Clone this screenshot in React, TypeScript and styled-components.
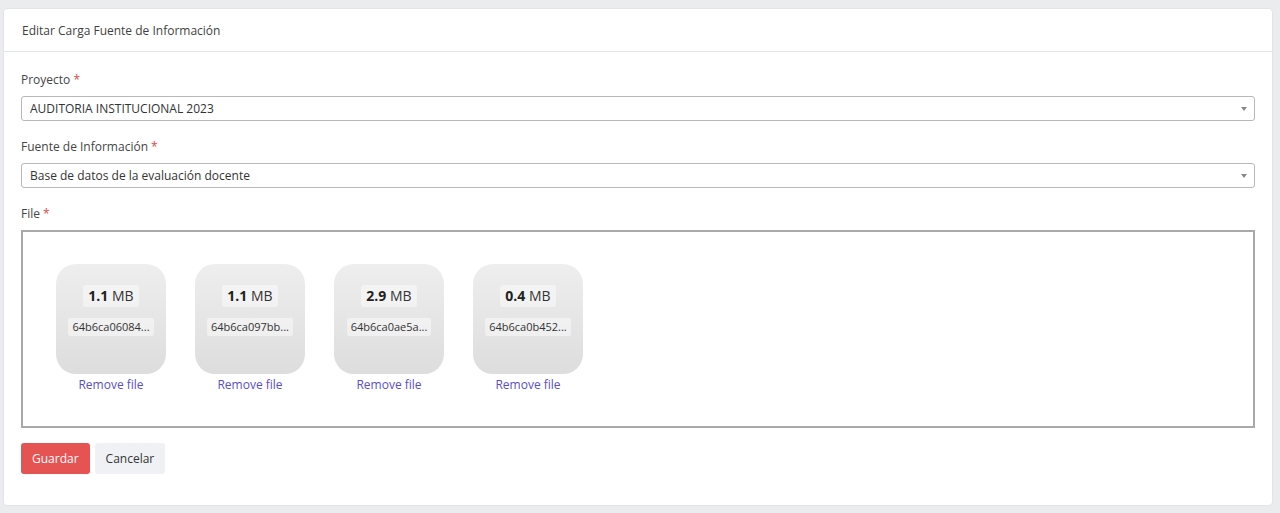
import React from "react";
import styled, { createGlobalStyle } from "styled-components";

const Global = createGlobalStyle`
  html, body { margin: 0; padding: 0; background: #ebecee; }
  body { font-family: "Open Sans", "Noto Sans", sans-serif; color: #3a3a3a; }
  * { box-sizing: border-box; }
`;

const Page = styled.div`
  padding: 8px 7px 7px 3px;
  height: 513px;
`;

const Card = styled.div`
  background: #fff;
  border: 1px solid #e2e4e7;
  border-radius: 4px;
  height: 498px;
  display: flex;
  flex-direction: column;
`;

const CardHeader = styled.div`
  height: 43px;
  display: flex;
  align-items: center;
  padding: 0 18px;
  border-bottom: 1px solid #e4e6e9;
  font-size: 12px;
  color: #3f3f3f;
`;

const CardBody = styled.div`
  padding: 20px 17px 0 17px;
  display: flex;
  flex-direction: column;
`;

const Label = styled.label`
  font-size: 12px;
  color: #444;
  line-height: 16px;
  margin-bottom: 8px;
  display: block;
`;

const Req = styled.span`
  color: #e0483f;
`;

const Field = styled.div`
  margin-bottom: 18px;
`;

const Select = styled.div`
  height: 25px;
  border: 1px solid #b8b8b8;
  border-radius: 3px;
  display: flex;
  align-items: center;
  justify-content: space-between;
  padding: 0 7px 0 8px;
  font-size: 12px;
  color: #333;
`;

const Caret = styled.span`
  width: 0;
  height: 0;
  border-left: 3.5px solid transparent;
  border-right: 3.5px solid transparent;
  border-top: 4px solid #888;
`;

const Dropzone = styled.div`
  height: 198px;
  border: 2px solid #a9a9a9;
  display: flex;
  align-items: flex-start;
  gap: 29px;
  padding: 32px 0 0 33px;
`;

const Preview = styled.div`
  display: flex;
  flex-direction: column;
  align-items: center;
  width: 110px;
`;

const Thumb = styled.div`
  width: 110px;
  height: 110px;
  border-radius: 20px;
  background: linear-gradient(to bottom, #eeeeee, #dddddd);
  display: flex;
  flex-direction: column;
  align-items: center;
  padding-top: 21px;
`;

const Size = styled.div`
  font-size: 14px;
  color: #333;
  background: rgba(255, 255, 255, 0.45);
  border-radius: 3px;
  padding: 0 5px;
  line-height: 22px;
  margin-bottom: 11px;
  b { font-weight: 700; color: #222; }
`;

const Name = styled.div`
  font-size: 11px;
  color: #333;
  background: rgba(255, 255, 255, 0.45);
  border-radius: 2px;
  padding: 0 4px;
  line-height: 18px;
  white-space: nowrap;
`;

const Remove = styled.a`
  font-size: 12px;
  color: #5a4fc7;
  margin-top: 3px;
  line-height: 16px;
  text-decoration: none;
  cursor: pointer;
`;

const Actions = styled.div`
  display: flex;
  gap: 5px;
  margin-top: 15px;
`;

const Button = styled.button<{ $primary?: boolean }>`
  height: 31px;
  border: none;
  border-radius: 3px;
  font-family: inherit;
  font-size: 12px;
  padding: 0 11px;
  background: ${(p) => (p.$primary ? "#e55353" : "#eff1f4")};
  color: ${(p) => (p.$primary ? "#fff" : "#333")};
`;

const files = [
  { size: "1.1", name: "64b6ca06084..." },
  { size: "1.1", name: "64b6ca097bb..." },
  { size: "2.9", name: "64b6ca0ae5a..." },
  { size: "0.4", name: "64b6ca0b452..." },
];

export default function App() {
  return (
    <>
      <Global />
      <Page>
        <Card>
          <CardHeader>Editar Carga Fuente de Información</CardHeader>
          <CardBody>
            <Field>
              <Label>
                Proyecto <Req>*</Req>
              </Label>
              <Select>
                <span>AUDITORIA INSTITUCIONAL 2023</span>
                <Caret />
              </Select>
            </Field>
            <Field>
              <Label>
                Fuente de Información <Req>*</Req>
              </Label>
              <Select>
                <span>Base de datos de la evaluación docente</span>
                <Caret />
              </Select>
            </Field>
            <div>
              <Label>
                File <Req>*</Req>
              </Label>
              <Dropzone>
                {files.map((f, i) => (
                  <Preview key={i}>
                    <Thumb>
                      <Size>
                        <b>{f.size}</b> MB
                      </Size>
                      <Name>{f.name}</Name>
                    </Thumb>
                    <Remove>Remove file</Remove>
                  </Preview>
                ))}
              </Dropzone>
            </div>
            <Actions>
              <Button $primary>Guardar</Button>
              <Button>Cancelar</Button>
            </Actions>
          </CardBody>
        </Card>
      </Page>
    </>
  );
}
